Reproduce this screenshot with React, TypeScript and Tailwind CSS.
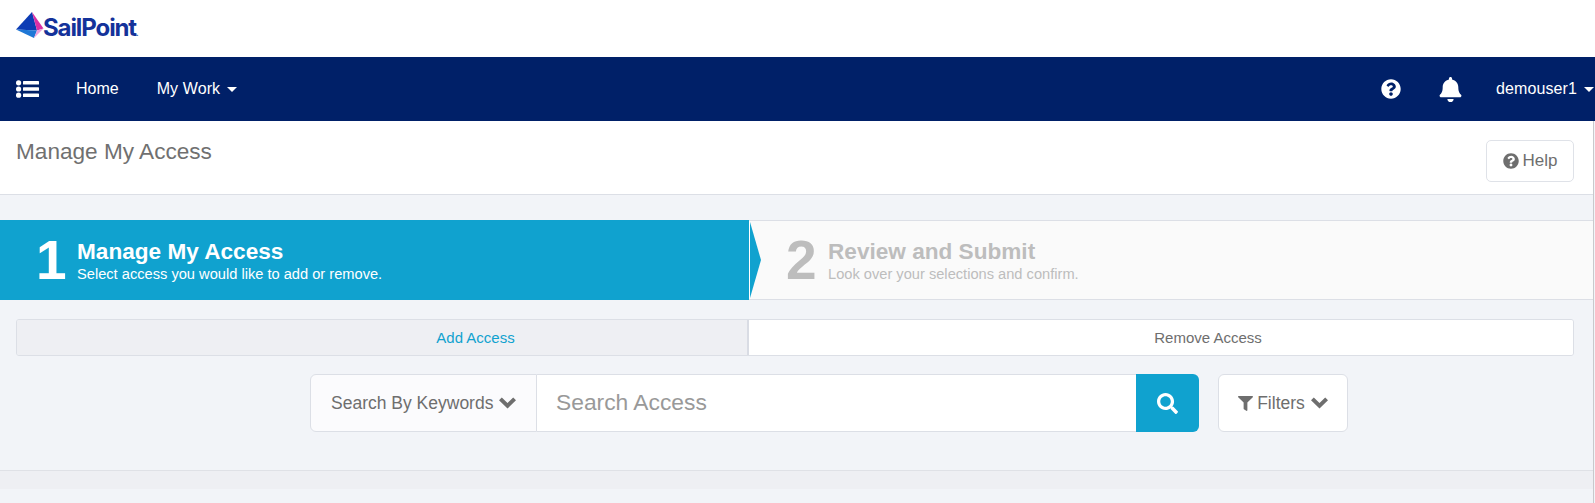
import { FaQuestionCircle, FaBell, FaFilter, FaSearch } from "react-icons/fa";

const Caret = () => (
  <span className="inline-block w-0 h-0 border-x-[5px] border-x-transparent border-t-[5px] border-t-white" />
);

const Chevron = () => (
  <svg width="17" height="12" viewBox="0 0 17 12" className="shrink-0 fill-[#6e6e6e]">
    <polygon points="0,3.2 2.8,0.4 8.5,6 14.2,0.4 17,3.2 8.5,11.6" />
  </svg>
);

const ListIcon = () => (
  <svg width="23" height="18" viewBox="0 0 23 18" className="ml-[16px] fill-white">
    <circle cx="2.6" cy="2.8" r="2.6" />
    <circle cx="2.6" cy="9" r="2.6" />
    <circle cx="2.6" cy="15.2" r="2.6" />
    <rect x="7" y="1" width="16" height="3.6" rx="0.6" />
    <rect x="7" y="7.2" width="16" height="3.6" rx="0.6" />
    <rect x="7" y="13.4" width="16" height="3.6" rx="0.6" />
  </svg>
);

function Logo() {
  return (
    <div className="flex h-[27px]">
      <svg width="28" height="27" viewBox="0 0 28 27" className="shrink-0">
        <polygon points="16,0 0,17.5 21,18.5" fill="#0d3cb4" />
        <polygon points="16,0 21,18.5 27.5,16.5" fill="#d92fa5" />
        <polygon points="0,17.5 21,18.5 18,26" fill="#1f78d6" />
        <polygon points="21,18.5 27.5,16.5 18,26" fill="#eea0dc" />
      </svg>
      <span className="mt-[4px] ml-[-1px] text-[24px] leading-[24px] font-bold tracking-[-1.1px] text-[#14329a] font-['Inter',sans-serif]">
        SailPoint<span className="text-[8px] tracking-normal">.</span>
      </span>
    </div>
  );
}

export default function App() {
  return (
    <div className="w-[1595px] h-[503px] overflow-hidden bg-[#f2f4f8] flex flex-col font-['Liberation_Sans',Arial,sans-serif] text-[#6e6e6e]">
      <header className="h-[57px] bg-white pl-[16px] pt-[12px] shrink-0">
        <Logo />
      </header>

      <nav className="h-[64px] bg-[#002068] text-white flex items-center shrink-0 text-[16px]">
        <ListIcon />
        <span className="ml-[37px]">Home</span>
        <span className="ml-[38px] flex items-center gap-[7px] tracking-[0.1px]">
          My Work <Caret />
        </span>
        <div className="ml-auto flex items-center">
          <FaQuestionCircle className="text-[20px]" />
          <FaBell className="ml-[37px] text-[25px]" />
          <span className="ml-[33px] mr-[1px] flex items-center gap-[7px] tracking-[0.1px]">
            demouser1 <Caret />
          </span>
        </div>
      </nav>

      <div className="mr-[1px] flex-1 flex flex-col border-r border-r-[#c9c9cc]">
        <section className="h-[74px] bg-white border-b border-b-[#dcdfe6] flex justify-between shrink-0 pl-[16px] pr-[19px]">
          <h1 className="text-[22.6px] leading-[24px] mt-[19px] text-[#707070]">Manage My Access</h1>
          <button className="mt-[19px] w-[88px] h-[42px] bg-white border border-[#dfe2e8] rounded-[5px] flex items-center justify-center gap-[4px] text-[17px]">
            <FaQuestionCircle className="text-[16px]" /> Help
          </button>
        </section>

        <div className="relative mt-[25px] h-[80px] flex shrink-0">
          <div className="w-[749px] bg-[#10a2cf] text-white flex items-center pl-[36px]">
            <span className="text-[55px] leading-none font-bold w-[41px]">1</span>
            <div className="pt-[2px]">
              <div className="text-[22.6px] leading-[24px] font-bold">Manage My Access</div>
              <div className="mt-[2px] text-[14.65px] leading-[17px]">Select access you would like to add or remove.</div>
            </div>
          </div>
          <div className="flex-1 bg-[#fafafa] border-y border-y-[#dcdfe6] flex items-center pl-[37px] text-[#bdbdbd]">
            <span className="text-[55px] leading-none font-bold w-[42px]">2</span>
            <div className="pt-[2px]">
              <div className="text-[22.6px] leading-[24px] font-bold">Review and Submit</div>
              <div className="mt-[2px] text-[14.65px] leading-[17px]">Look over your selections and confirm.</div>
            </div>
          </div>
          <svg width="13" height="80" viewBox="0 0 13 80" className="absolute left-[749px] top-0">
            <polygon points="0,0 12,40 0,80" fill="#ffffff" />
            <polygon points="1,2 12,40 1,78" fill="#10a2cf" />
          </svg>
        </div>

        <div className="mt-[19px] mx-[16px] mr-[19px] h-[37px] flex text-[15px] border border-[#dcdfe6] rounded-[3px] overflow-hidden shrink-0">
          <div className="w-[732px] pl-[187px] pt-[1px] bg-[#eeeff3] text-[#10a2cf] flex items-center justify-center border-r-2 border-r-[#d9dce4]">
            Add Access
          </div>
          <div className="flex-1 pl-[94px] pt-[1px] bg-white flex items-center justify-center">Remove Access</div>
        </div>

        <div className="mt-[18px] pl-[310px] flex h-[58px] shrink-0">
          <div className="w-[227px] bg-[#fbfbfd] border border-[#dcdfe6] rounded-l-[6px] flex items-center pl-[20px] gap-[6px] text-[17.5px]">
            Search By Keywords <Chevron />
          </div>
          <div className="w-[599px] bg-white border-y border-y-[#dcdfe6] flex items-center pl-[19px] pb-[2px] text-[22.8px] text-[#999999]">
            Search Access
          </div>
          <div className="w-[63px] bg-[#10a2cf] rounded-r-[6px] flex items-center justify-center text-white">
            <FaSearch className="text-[21px]" />
          </div>
          <button className="ml-[19px] w-[130px] bg-white border border-[#dcdfe6] rounded-[6px] flex items-center justify-center text-[17.5px] gap-[4px]">
            <FaFilter className="text-[15px]" /> Filters <span className="ml-[2px]"><Chevron /></span>
          </button>
        </div>

        <div className="mt-[38px] h-[19px] bg-[#eeeff3] border-t border-t-[#dfe1e6] shrink-0" />
      </div>
    </div>
  );
}
